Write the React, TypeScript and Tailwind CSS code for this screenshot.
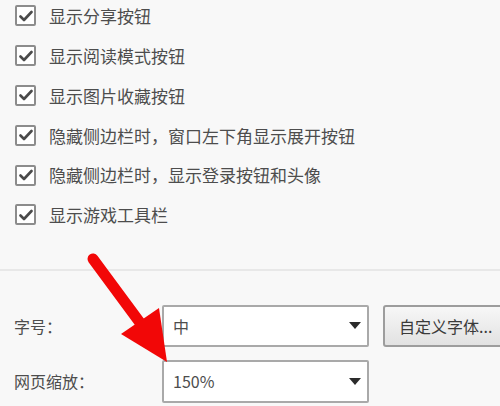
import React from "react";

const options = [
  "显示分享按钮",
  "显示阅读模式按钮",
  "显示图片收藏按钮",
  "隐藏侧边栏时，窗口左下角显示展开按钮",
  "隐藏侧边栏时，显示登录按钮和头像",
  "显示游戏工具栏",
];

function CheckBox() {
  return (
    <span className="flex h-[21px] w-[21px] shrink-0 items-center justify-center rounded-[2px] border-2 border-[#8c8c8c] bg-white">
      <svg width="14" height="12" viewBox="0 0 14 12" fill="none">
        <path d="M1.5 6.5 L5 10 L12.5 2" stroke="#4a4a4a" strokeWidth="2.6" strokeLinecap="round" strokeLinejoin="round" />
      </svg>
    </span>
  );
}

function Caret() {
  return (
    <svg width="12" height="7" viewBox="0 0 12 7">
      <path d="M0 0 H12 L6 7 Z" fill="#2b2b2b" />
    </svg>
  );
}

function Select({ value }: { value: string }) {
  return (
    <div className="flex h-full w-[207px] shrink-0 items-center justify-between rounded-[2px] border-2 border-[#a9a9a9] bg-white pl-[9px] pr-[6px]">
      <span>{value}</span>
      <Caret />
    </div>
  );
}

export default function App() {
  return (
    <div
      className="relative h-[406px] w-[500px] overflow-hidden bg-[#f8f8f8] text-[#4d4d4d]"
      style={{ fontFamily: '"Noto Sans CJK SC", "Noto Sans", sans-serif' }}
    >
      {/* Checkbox list */}
      <div className="-mt-1 flex flex-col pl-[15px]">
        {options.map((label) => (
          <div key={label} className="flex h-[39.8px] items-center gap-[13px] text-[17px]">
            <CheckBox />
            <span>{label}</span>
          </div>
        ))}
      </div>

      <div className="mt-[34px] h-[2px] w-full bg-[#e8e8e8]" />

      {/* Font settings */}
      <div className="mt-[34px] flex flex-col gap-[13px] text-[16px]">
        <div className="flex h-[42px] items-center">
          <span className="w-[162px] shrink-0 pl-[14px]">字号：</span>
          <Select value="中" />
          <button className="ml-[14px] h-full w-[140px] shrink-0 rounded-[3px] border-2 border-[#9d9d9d] bg-gradient-to-b from-[#f7f7f7] to-[#e2e2e2] pl-[14px] text-left text-[16px] text-[#3a3a3a]">
            自定义字体...
          </button>
        </div>
        <div className="flex h-[43px] items-center">
          <span className="w-[162px] shrink-0 pl-[14px]">网页缩放：</span>
          <Select value="150%" />
        </div>
      </div>

      {/* Red annotation arrow */}
      <svg className="pointer-events-none absolute left-0 top-0" width="500" height="406" viewBox="0 0 500 406">
        <line x1="93" y1="259" x2="141" y2="324" stroke="#f20707" strokeWidth="11" strokeLinecap="round" />
        <polygon points="121,334 159,308 167,362" fill="#f20707" />
      </svg>
    </div>
  );
}
